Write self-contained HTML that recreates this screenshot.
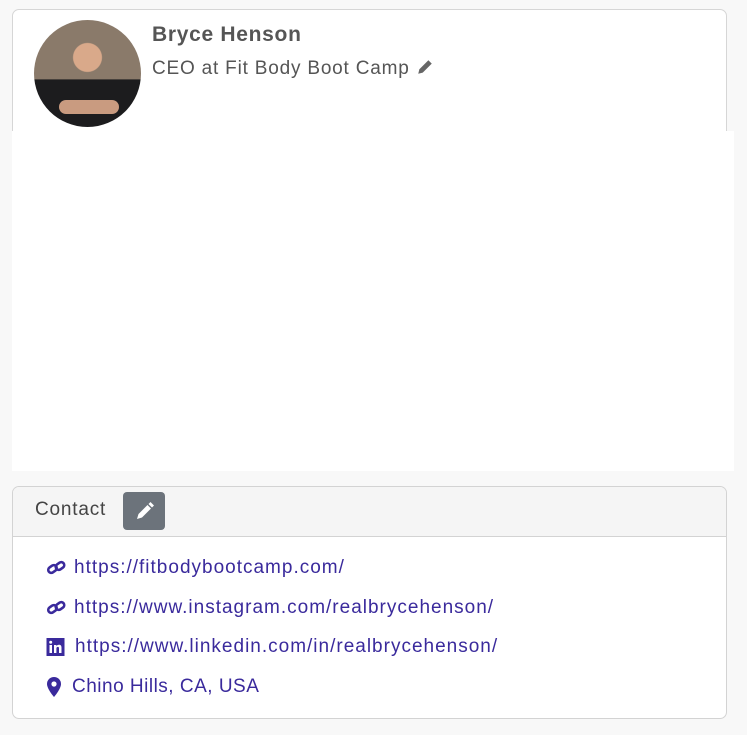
<!DOCTYPE html>
<html><head><style>
body{margin:0;width:747px;height:735px;background:#f8f8f8;font-family:"Liberation Sans",sans-serif;position:relative;overflow:hidden}
.card1{position:absolute;left:12px;top:9px;width:713px;height:140px;background:#fff;border:1px solid #d6d6d6;border-radius:7px}
.white{position:absolute;left:12px;top:131px;width:722px;height:340px;background:#fff}
.av{position:absolute;left:34px;top:20px;width:107px;height:107px;border-radius:50%;background:radial-gradient(circle at 50% 35%,#d9a98a 0 16%,transparent 17%),linear-gradient(180deg,#8a7a6a 0,#8a7a6a 55%,#1c1c1e 56%,#1c1c1e 100%);overflow:hidden}
.av:after{content:"";position:absolute;left:25px;top:80px;width:60px;height:14px;border-radius:7px;background:#c99b80}
.name{position:absolute;left:152px;top:23px;font-size:21px;font-weight:bold;color:#555;letter-spacing:0.7px}
.title{position:absolute;left:152px;top:58px;font-size:19px;color:#555;letter-spacing:0.8px}
.card2{position:absolute;left:12px;top:486px;width:713px;height:231px;background:#fff;border:1px solid #d3d3d3;border-radius:7px;overflow:hidden}
.hd{height:49px;background:#f5f5f5;border-bottom:1px solid #d3d3d3;position:relative}
.hd span{position:absolute;left:22px;top:12px;font-size:19px;color:#444;letter-spacing:0.8px}
.btn{position:absolute;left:110px;top:5px;width:42px;height:38px;background:#6c737b;border-radius:4px}
.row{position:absolute;left:46px;font-size:19px;color:#3a2a9c;display:flex;align-items:center;letter-spacing:1px}
.row svg{margin-right:7px}
</style></head><body>
<div class="card1"></div>
<div class="white"></div>
<div class="av"></div>
<div class="name">Bryce Henson</div>
<div class="title">CEO at Fit Body Boot Camp <svg width="18" height="18" viewBox="0 0 16 16" style="vertical-align:-2px"><path d="M2 14l1-4 8-8 3 3-8 8z" fill="#666"/></svg></div>
<div class="card2">
<div class="hd"><span>Contact</span><div class="btn"><svg width="42" height="38" viewBox="0 0 42 38"><path d="M14 27l1.5-5 9-9 3.5 3.5-9 9z M25.5 12l2-2 3.5 3.5-2 2z" fill="#fff"/></svg></div></div>
</div>
<div class="row" style="top:557px"><svg width="21" height="18" viewBox="0 0 20 18"><g fill="none" stroke="#3a2a9c" stroke-width="2.6"><rect x="1.5" y="7" width="9" height="6" rx="3" transform="rotate(-35 6 10)"/><rect x="9" y="4" width="9" height="6" rx="3" transform="rotate(-35 13.5 7)"/></g></svg>https://fitbodybootcamp.com/</div>
<div class="row" style="top:597px"><svg width="21" height="18" viewBox="0 0 20 18"><g fill="none" stroke="#3a2a9c" stroke-width="2.6"><rect x="1.5" y="7" width="9" height="6" rx="3" transform="rotate(-35 6 10)"/><rect x="9" y="4" width="9" height="6" rx="3" transform="rotate(-35 13.5 7)"/></g></svg>https://www.instagram.com/realbrycehenson/</div>
<div class="row" style="top:636px"><svg width="19" height="18" viewBox="0 0 18 18" style="margin-right:10px"><rect width="18" height="18" fill="#3a2a9c"/><rect x="3" y="7" width="2.5" height="8" fill="#fff"/><circle cx="4.2" cy="4.3" r="1.5" fill="#fff"/><path d="M7.5 7h2.4v1.2c.6-1 1.6-1.4 2.6-1.4 2 0 2.5 1.3 2.5 3V15h-2.5v-4.5c0-1-.3-1.6-1.2-1.6-1 0-1.4.7-1.4 1.6V15H7.5z" fill="#fff"/></svg>https://www.linkedin.com/in/realbrycehenson/</div>
<div class="row" style="top:676px;letter-spacing:0.5px"><svg width="16" height="22" viewBox="0 0 16 22" style="margin-right:10px"><path d="M8 1a7 7 0 0 0-7 7c0 5 7 13 7 13s7-8 7-13a7 7 0 0 0-7-7z" fill="#3a2a9c"/><circle cx="8" cy="8" r="2.6" fill="#fff"/></svg>Chino Hills, CA, USA</div>
</body></html>
